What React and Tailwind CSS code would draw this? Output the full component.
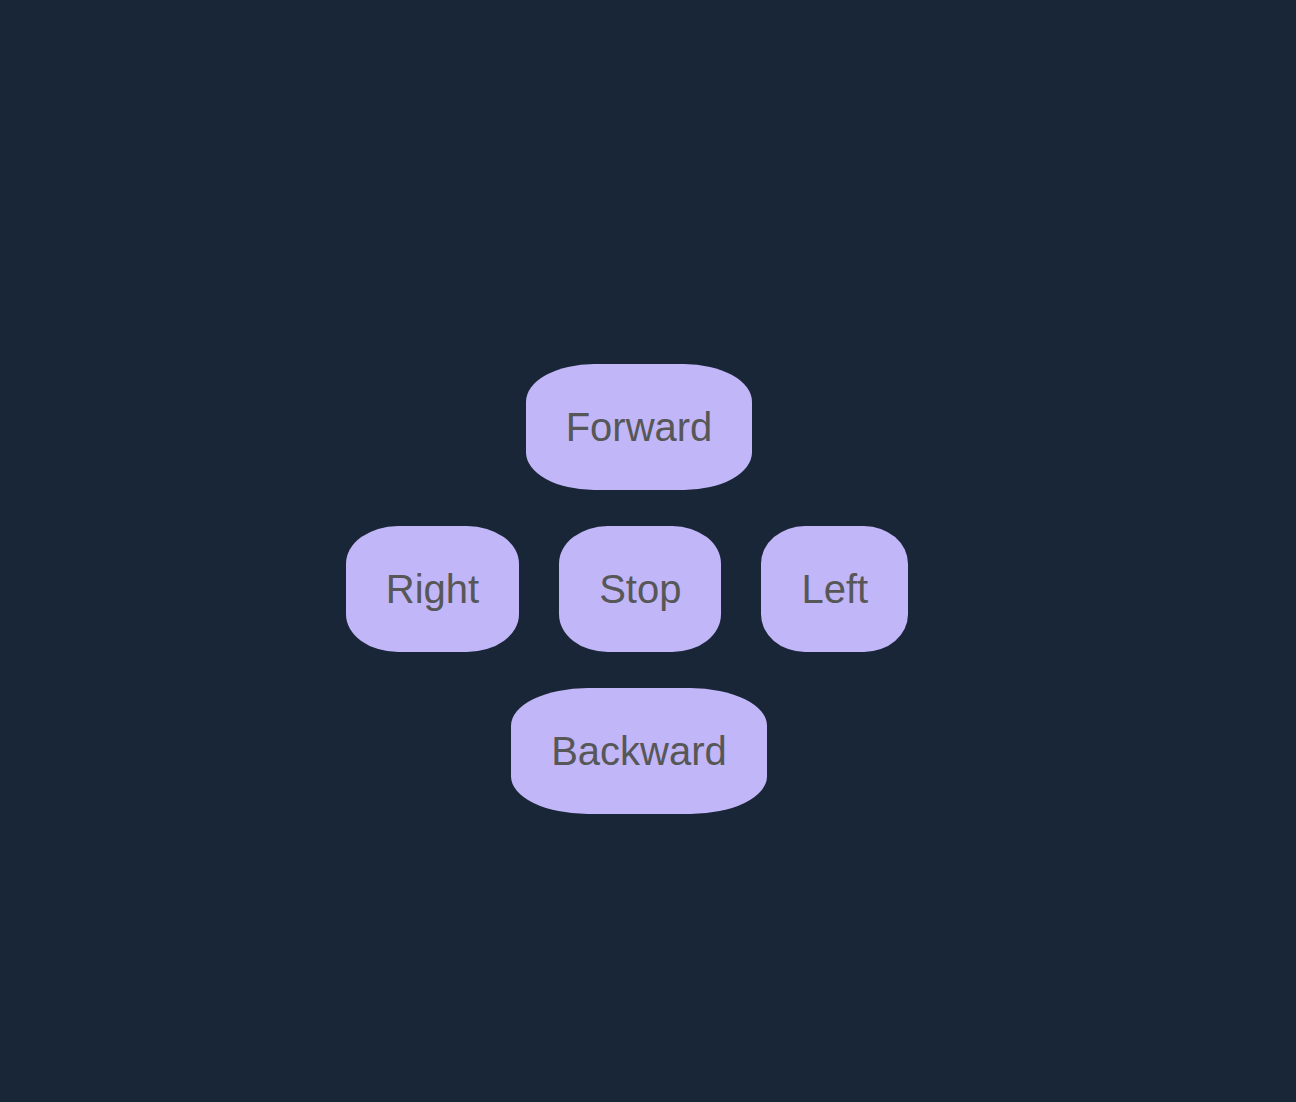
import React from 'react';

const Pad = ({ label, className = '' }) => (
  <button
    type="button"
    className={`rounded-[30%] bg-[#c1b6f7] px-10 py-10 text-[40px] leading-[46px] text-[#575757] ${className}`}
  >
    {label}
  </button>
);

const App = () => {
  return (
    <div className="min-h-screen bg-[#192637] font-['Liberation_Sans',Arial,sans-serif]">
      <div className="flex flex-col items-center gap-9 pt-[364px] pr-[18px]">
        <Pad label="Forward" />
        <div className="mr-6 flex items-center gap-10">
          <Pad label="Right" />
          <Pad label="Stop" />
          <Pad label="Left" />
        </div>
        <Pad label="Backward" />
      </div>
    </div>
  );
};

export default App;
